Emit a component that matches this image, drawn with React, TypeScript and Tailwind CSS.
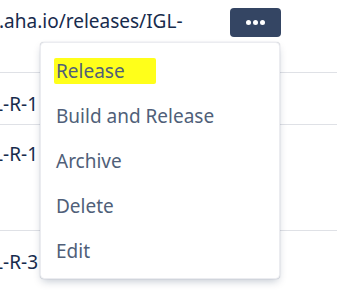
const rows = [
  { h: "h-[73px]", pt: "pt-[9px]", text: ".aha.io/releases/IGL-" },
  { h: "h-[52px]", pt: "pt-[19px]", text: "IGL-R-1" },
  { h: "h-[106px]", pt: "pt-[17px]", text: "IGL-R-1" },
  { h: "h-[74px]", pt: "pt-[19px]", text: "IGL-R-3" },
];

const items = ["Release", "Build and Release", "Archive", "Delete", "Edit"];

export default function App() {
  return (
    <div className="relative h-[305px] w-[337px] overflow-hidden bg-white font-['Noto_Sans',sans-serif] text-[19px] text-[#172b4d]">
      {rows.map((r, i) => (
        <div
          key={i}
          className={`${r.h} ${r.pt} flex items-start ${i < rows.length - 1 ? "border-b border-[#dfe1e6]" : ""}`}
        >
          {i === 0 ? (
            <span className="ml-[-1px] whitespace-nowrap leading-[24px]">{r.text}</span>
          ) : (
            <div className="flex w-[38px] justify-end overflow-hidden">
              <span className="whitespace-nowrap leading-[24px]">{r.text}</span>
            </div>
          )}
          {i === 0 && (
            <button className="ml-auto mr-[56px] mt-[-1px] flex h-[29px] w-[51px] items-center justify-center gap-[2px] rounded-[4px] bg-[#344563]">
              <span className="h-[5px] w-[5px] rounded-full bg-white" />
              <span className="h-[5px] w-[5px] rounded-full bg-white" />
              <span className="h-[5px] w-[5px] rounded-full bg-white" />
            </button>
          )}
        </div>
      ))}

      <div className="absolute left-[40px] top-[42px] flex w-[240px] flex-col rounded-[4px] border border-[#ebecf0] bg-white py-[5px] shadow-[0_4px_8px_-2px_rgba(9,30,66,0.25),0_0_1px_rgba(9,30,66,0.31)]">
        {items.map((it, i) => (
          <div key={it} className="relative flex h-[45px] items-center px-[15px] text-[#505f79]">
            {i === 0 && <span className="absolute left-[13px] top-[10px] h-[26px] w-[102px] rounded-[2px] bg-[#ffff1a]" />}
            <span className="relative leading-[24px]">{it}</span>
          </div>
        ))}
      </div>
    </div>
  );
}
